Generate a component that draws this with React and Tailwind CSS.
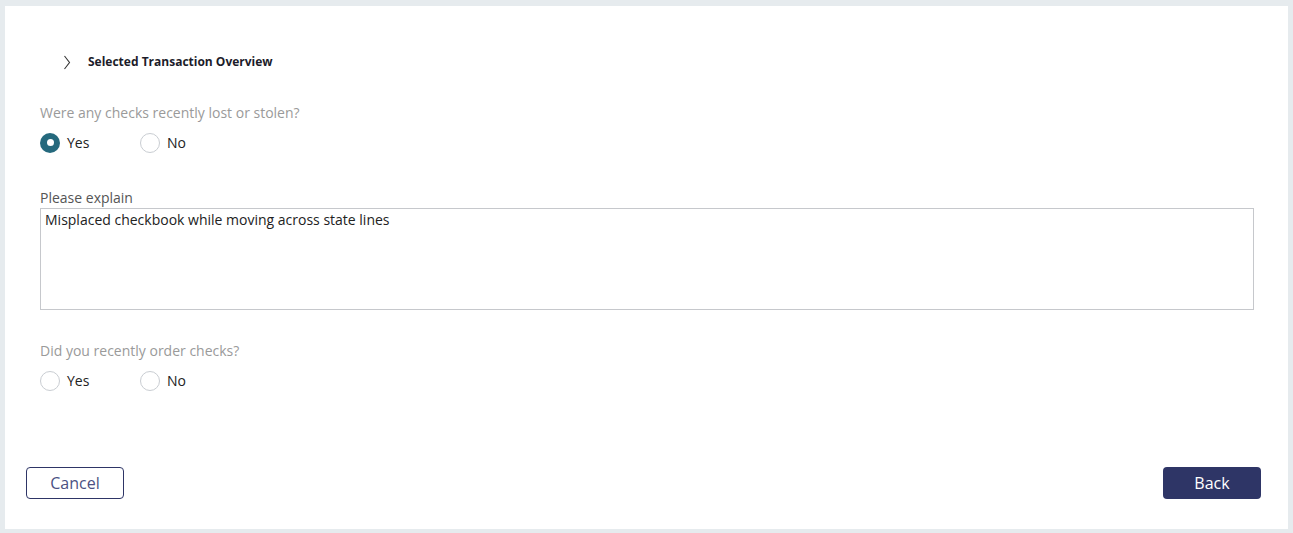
import React, { useState } from 'react';

function Radio({ checked, label, onClick }) {
  return (
    <button type="button" onClick={onClick} className="flex items-center gap-[7px] w-[100px] text-left">
      {checked ? (
        <span className="w-[20px] h-[20px] rounded-full bg-[#25697d] flex items-center justify-center">
          <span className="w-[7px] h-[7px] rounded-full bg-white" />
        </span>
      ) : (
        <span className="w-[20px] h-[20px] rounded-full border border-[#c9cdd2] bg-white" />
      )}
      <span className="text-[14px] text-[#222]">{label}</span>
    </button>
  );
}

function RadioQuestion({ question, value, onChange }) {
  return (
    <div>
      <p className="text-[14px] text-[#9a9a9a] leading-[20px]">{question}</p>
      <div className="flex mt-[9px]">
        <Radio checked={value === 'yes'} label="Yes" onClick={() => onChange('yes')} />
        <Radio checked={value === 'no'} label="No" onClick={() => onChange('no')} />
      </div>
    </div>
  );
}

export default function App() {
  const [lost, setLost] = useState('yes');
  const [ordered, setOrdered] = useState(null);
  const [note, setNote] = useState('Misplaced checkbook while moving across state lines');

  return (
    <div className="w-[1293px] h-[533px] bg-[#e6ebee] pt-[6px] pl-[5px] pr-[5px] pb-[4px]" style={{ fontFamily: '"Open Sans", sans-serif' }}>
      <div className="bg-white h-full flex flex-col pl-[35px] pr-[34px]">
        {/* Collapsible header */}
        <div className="flex items-center mt-[47px] pl-[23px] h-[18px]">
          <svg width="8" height="15" viewBox="0 0 8 15" className="text-[#333]">
            <path d="M1.5 1 L6.5 7.5 L1.5 14" fill="none" stroke="currentColor" strokeWidth="1.1" />
          </svg>
          <span className="ml-[17px] text-[12px] font-bold text-[#1c1c2a]">Selected Transaction Overview</span>
        </div>

        <div className="mt-[32px]">
          <RadioQuestion question="Were any checks recently lost or stolen?" value={lost} onChange={setLost} />
        </div>

        <div className="mt-[35px]">
          <p className="text-[14px] text-[#555] leading-[20px]">Please explain</p>
          <textarea
            value={note}
            onChange={(e) => setNote(e.target.value)}
            className="block w-full h-[102px] border border-[#c6c8cc] px-[4px] py-0 text-[14px] text-[#222] resize-none outline-none"
          />
        </div>

        <div className="mt-[31px]">
          <RadioQuestion question="Did you recently order checks?" value={ordered} onChange={setOrdered} />
        </div>

        <div className="flex justify-between mt-auto mb-[30px] -mx-[14px] pr-[7px]">
          <button className="w-[98px] h-[32px] border border-[#2e3566] rounded-[4px] text-[16px] text-[#4b5183]">Cancel</button>
          <button className="w-[98px] h-[32px] bg-[#2e3566] rounded-[4px] text-[16px] text-white">Back</button>
        </div>
      </div>
    </div>
  );
}
